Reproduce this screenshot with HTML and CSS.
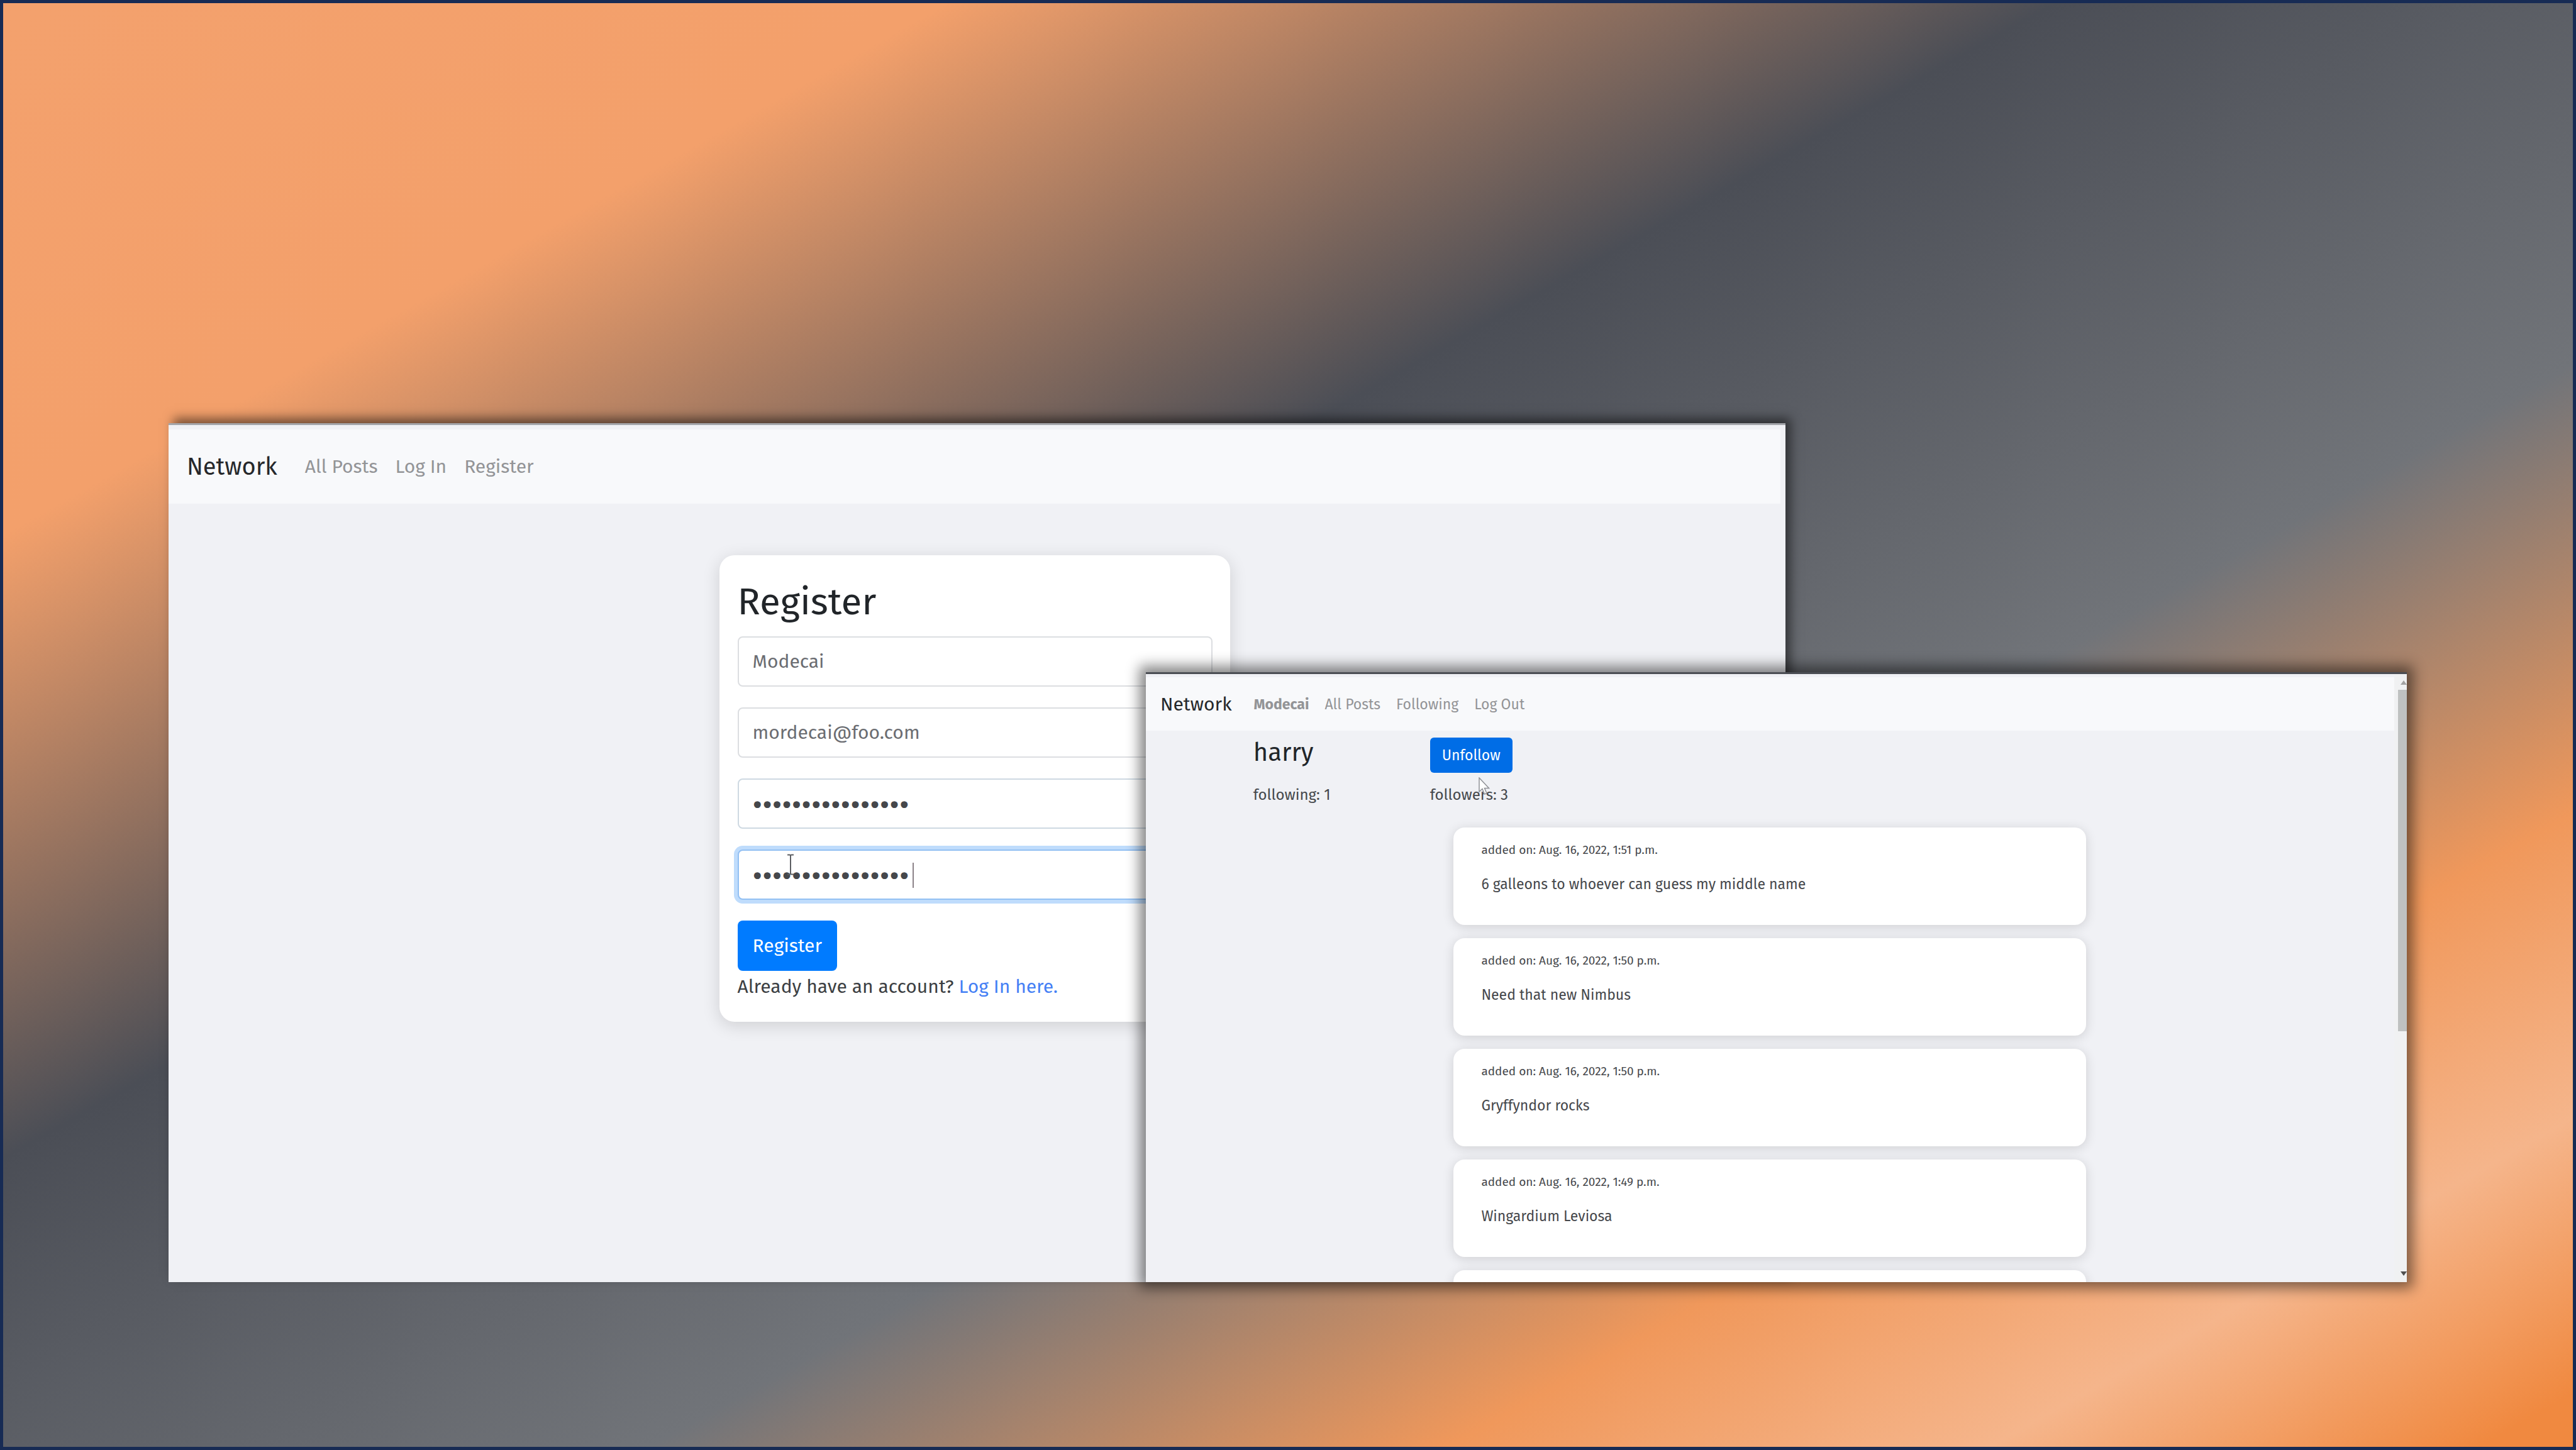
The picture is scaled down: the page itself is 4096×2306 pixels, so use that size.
FILE: index.html
```html
<!DOCTYPE html>
<html lang="en">
<head>
<meta charset="utf-8">
<title>Network</title>
<link rel="stylesheet" href="styles.css">
</head>
<body>
<div class="desktop">

  <section class="window window-register" aria-label="Register page">
    <div class="page">
      <nav class="navbar">
        <a class="brand" href="#">Network</a>
        <a class="nav-link" href="#">All Posts</a>
        <a class="nav-link" href="#">Log In</a>
        <a class="nav-link" href="#">Register</a>
      </nav>
      <main class="register-card">
        <h1 class="title">Register</h1>
        <form class="form">
          <input class="field" type="text" aria-label="Username" value="Modecai">
          <input class="field" type="email" aria-label="Email address" value="mordecai@foo.com">
          <input class="field field-password" type="password" aria-label="Password" value="expectopatronum1">
          <div class="field-wrap">
            <input class="field field-password field-focused" type="password" aria-label="Confirm password" value="expectopatronum1">
            <span class="caret"></span>
            <svg class="text-cursor" viewBox="0 0 12 34" aria-hidden="true">
              <path d="M1 1.5h3.500q1.500 0 1.500 2q0-2 1.500-2H11M6 3v28M1 32.500h3.500q1.500 0 1.500-2q0 2 1.500 2H11" fill="none" stroke="#5c5e62" stroke-width="2"/>
            </svg>
          </div>
          <button class="btn btn-register" type="button">Register</button>
        </form>
        <p class="hint">Already have an account? <a class="hint-link" href="#">Log In here.</a></p>
      </main>
    </div>
  </section>

  <section class="window window-profile" aria-label="Profile page">
    <div class="page">
      <nav class="navbar">
        <a class="brand" href="#">Network</a>
        <a class="nav-link nav-user" href="#">Modecai</a>
        <a class="nav-link" href="#">All Posts</a>
        <a class="nav-link" href="#">Following</a>
        <a class="nav-link" href="#">Log Out</a>
      </nav>
      <header class="profile">
        <h2 class="profile-name">harry</h2>
        <button class="btn btn-unfollow" type="button">Unfollow</button>
        <p class="count">following: 1</p>
        <p class="count count-followers">followers: 3
          <svg class="pointer" viewBox="0 0 18 28" aria-hidden="true">
            <path d="M1 1V23L6 18.500L9.500 27L13 25.500L9.500 17.500H16.500Z" fill="#fff" stroke="#8f9196" stroke-width="1.500"/>
          </svg>
        </p>
      </header>
      <main class="posts">
        <article class="post">
          <p class="post-date">added on: Aug. 16, 2022, 1:51 p.m.</p>
          <p class="post-text">6 galleons to whoever can guess my middle name</p>
        </article>
        <article class="post">
          <p class="post-date">added on: Aug. 16, 2022, 1:50 p.m.</p>
          <p class="post-text">Need that new Nimbus</p>
        </article>
        <article class="post">
          <p class="post-date">added on: Aug. 16, 2022, 1:50 p.m.</p>
          <p class="post-text">Gryffyndor rocks</p>
        </article>
        <article class="post">
          <p class="post-date">added on: Aug. 16, 2022, 1:49 p.m.</p>
          <p class="post-text">Wingardium Leviosa</p>
        </article>
        <article class="post post-next"></article>
      </main>
    </div>
    <div class="scrollbar" aria-hidden="true">
      <svg class="arrow" viewBox="0 0 10 7"><path d="M0 7L5 0L10 7Z" fill="#a3a3a3"/></svg>
      <span class="thumb"></span>
      <svg class="arrow" viewBox="0 0 10 7"><path d="M0 0L5 7L10 0Z" fill="#505050"/></svg>
    </div>
  </section>

</div>
</body>
</html>
```
FILE: styles.css
```css
* {
  box-sizing: border-box;
}

body,
h1,
h2,
p {
  margin: 0;
  font-weight: 400;
}

body {
  font-family: "Trebuchet MS", "Fira Sans", Lato, sans-serif;
  color: #212529;
}

a {
  text-decoration: none;
}

.desktop {
  position: relative;
  height: 100vh;
  overflow: hidden;
  background: linear-gradient(to bottom right,
    #f3a16d 0%,
    #f3a06b 18.5%,
    #4b4e56 40%,
    #717479 62.5%,
    #f0985b 78%,
    #f5b58b 88.500%,
    #f08940 98%);
}

.desktop::after {
  content: "";
  position: absolute;
  inset: 0;
  border: 5px solid #172b54;
  pointer-events: none;
}

/* Windows */

.window {
  position: absolute;
  display: flex;
  bottom: 11.58%;
  background: #f0f1f5;
}

.window-register {
  left: 6.54%;
  top: 29.19%;
  width: 62.78%;
  padding-right: 8px;
  border-top: 3px solid #a4a6ab;
  box-shadow: 8px -8px 16px rgba(0, 0, 0, 0.5);
}

.window-profile {
  left: 44.48%;
  top: 46.36%;
  width: 48.95%;
  border-top: 3px solid #4b4e54;
  box-shadow: 0 0 20px 10px rgba(0, 0, 0, 0.48);
}

.page {
  flex: 1;
  min-width: 0;
  overflow: hidden;
}

/* Navigation */

.navbar {
  display: flex;
  align-items: center;
  background: #f8f9fb;
}

.brand {
  color: #26282b;
}

.nav-link {
  color: #939497;
}

.nav-user {
  font-weight: 700;
}

.window-register .navbar {
  height: 118px;
  margin-top: 7px;
  padding: 0 29px;
  gap: 28px;
  font-size: 30px;
}

.window-register .brand {
  margin-right: 16px;
  font-size: 38px;
}

.window-profile .navbar {
  height: 85px;
  margin-top: 5px;
  padding: 0 23px;
  gap: 25px;
  font-size: 23px;
}

.window-profile .brand {
  margin-right: 10px;
  font-size: 30px;
}

/* Register form */

.register-card {
  width: 812px;
  margin: 82px auto 0;
  padding: 29px 28px 31px 29px;
  border-radius: 24px;
  background: #fff;
  box-shadow: 0 6px 28px rgba(0, 0, 0, 0.14);
}

.title {
  margin-bottom: 10px;
  font-size: 60px;
  line-height: 90px;
}

.form {
  display: grid;
  justify-items: start;
  gap: 33px;
}

.field {
  display: block;
  width: 100%;
  height: 80px;
  padding: 0 22px;
  border: 2px solid #dcdee1;
  border-radius: 8px;
  outline: none;
  background: #fff;
  color: #6b6d72;
  font: inherit;
  font-size: 30px;
}

.field-password {
  padding-top: 4px;
  border-color: #ced9e2;
  color: #45474b;
  font-size: 48px;
}

.field-focused {
  border-color: #93c0f3;
  box-shadow: 0 0 0 6px #bfdcfc;
}

.field-wrap {
  position: relative;
  width: 100%;
}

.caret {
  position: absolute;
  left: 278px;
  top: 21px;
  width: 2px;
  height: 40px;
  background: #8b8288;
}

.text-cursor {
  position: absolute;
  left: 78px;
  top: 7px;
  width: 12px;
  height: 34px;
}

.btn {
  border: 0;
  color: #fff;
  font: inherit;
}

.btn-register {
  height: 80px;
  padding: 0 24px;
  border-radius: 8px;
  background: #007bff;
  font-size: 30px;
}

.hint {
  font-size: 30px;
  line-height: 50px;
  color: #3c3f43;
}

.hint-link {
  color: #4580f5;
}

/* Profile */

.profile {
  display: grid;
  grid-template-columns: 281px 1fr;
  justify-items: start;
  row-gap: 15px;
  width: 85%;
  margin: 0 auto;
  padding: 11px 22px 0;
}

.profile-name {
  font-size: 40px;
  line-height: 48px;
}

.btn-unfollow {
  height: 56px;
  padding: 0 19px;
  border-radius: 6px;
  background: #006de6;
  font-size: 23px;
}

.count {
  font-size: 24px;
  line-height: 40px;
  color: #45484c;
}

.count-followers {
  position: relative;
}

.pointer {
  position: absolute;
  left: 77px;
  top: -8px;
  width: 18px;
  height: 28px;
}

/* Posts */

.posts {
  display: grid;
  gap: 21px;
  width: 1006px;
  margin: 32px auto 0;
}

.post {
  display: grid;
  gap: 19px;
  padding: 21px 44px 45px;
  border-radius: 18px;
  background: #fff;
  box-shadow: 0 3px 18px rgba(0, 0, 0, 0.14);
  color: #46484c;
}

.post-date {
  font-size: 19px;
  line-height: 30px;
}

.post-text {
  font-size: 23px;
  line-height: 40px;
}

.post-next {
  height: 155px;
}

/* Scroll bar */

.scrollbar {
  display: grid;
  grid-template-rows: auto 543px 1fr;
  width: 20px;
  padding: 10px 0 10px;
  justify-items: end;
  overflow: hidden;
  background: #f0f1f2;
}

.arrow {
  width: 10px;
  height: 7px;
  align-self: end;
}

.thumb {
  width: 14px;
  margin-top: 8px;
  margin-bottom: -8px;
  background: #bfc1c1;
}
```
